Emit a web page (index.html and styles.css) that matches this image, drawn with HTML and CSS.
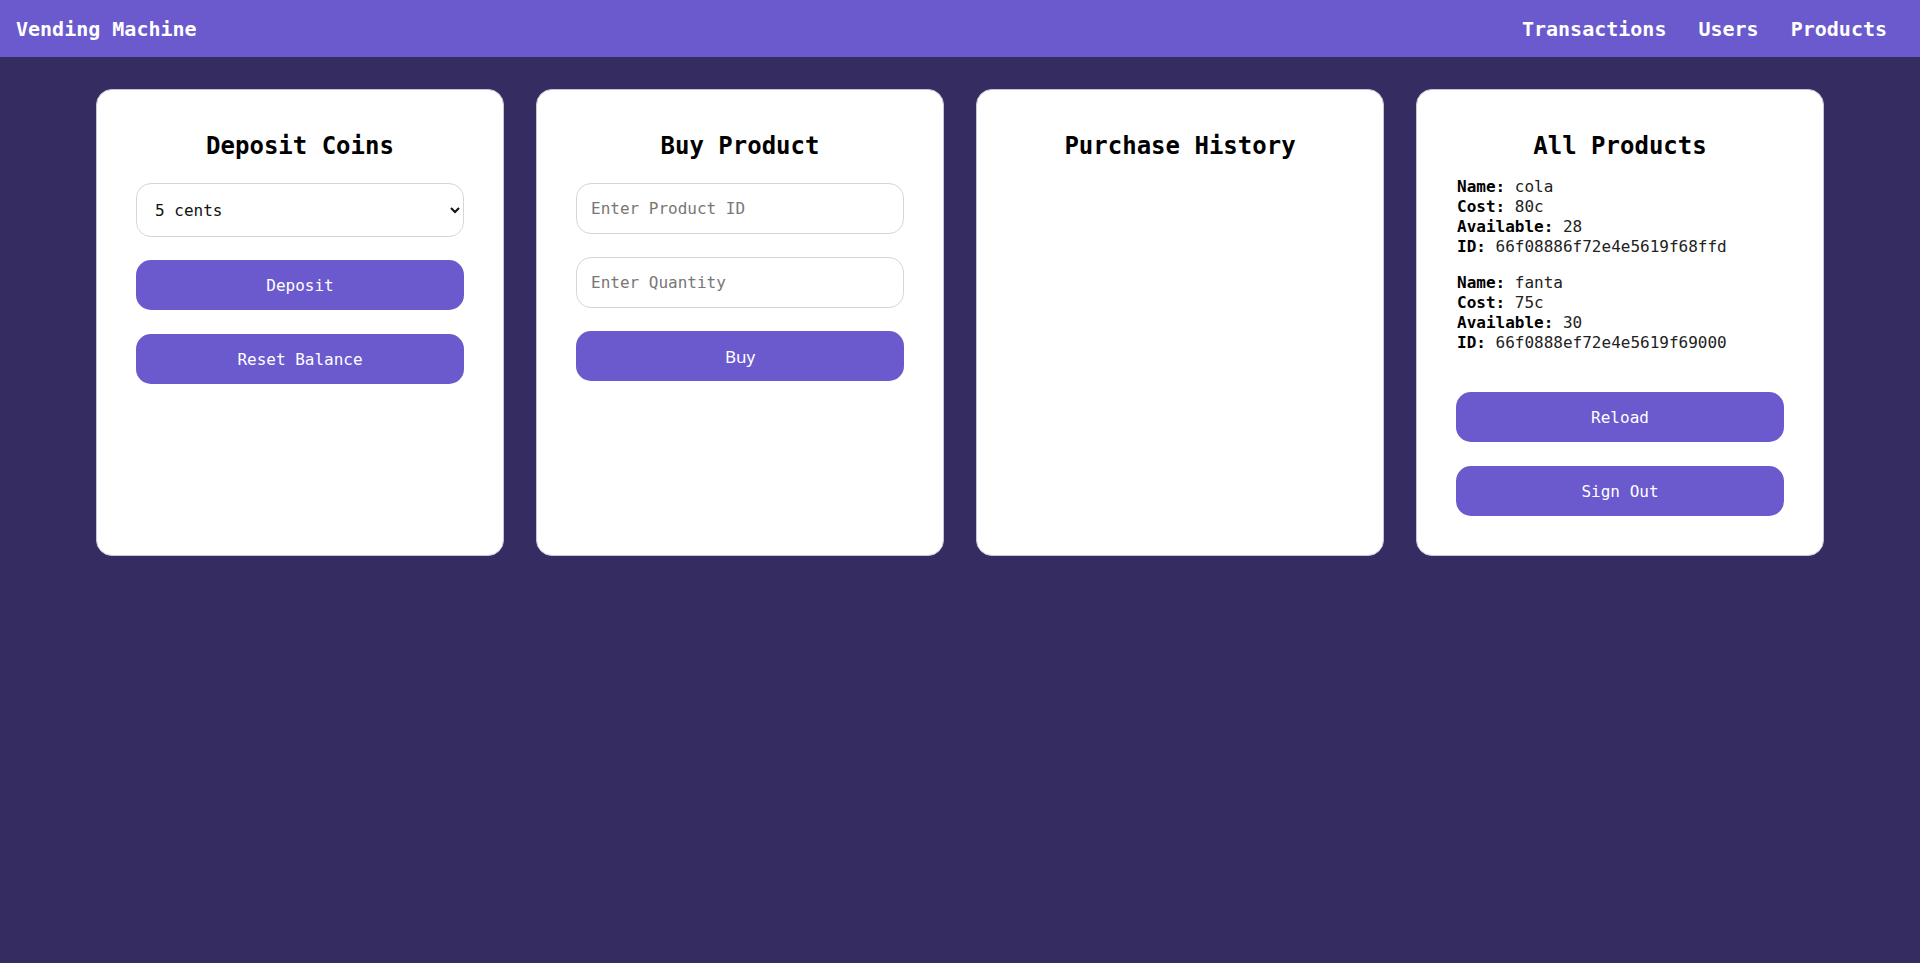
FILE: index.html
```html
<!DOCTYPE html>
<html lang="en">
<head>
<meta charset="utf-8">
<title>Vending Machine</title>
<link rel="stylesheet" href="styles.css">
</head>
<body>
<nav class="navbar">
  <div class="brand">Vending Machine</div>
  <div class="nav-links">
    <a class="nav-link" href="#">Transactions</a>
    <a class="nav-link" href="#">Users</a>
    <a class="nav-link" href="#">Products</a>
  </div>
</nav>
<main class="cards">
  <section class="card">
    <h2 class="card-title">Deposit Coins</h2>
    <div class="form">
      <select class="field select">
        <option>5 cents</option>
        <option>10 cents</option>
        <option>20 cents</option>
        <option>50 cents</option>
        <option>100 cents</option>
      </select>
      <button class="btn">Deposit</button>
      <button class="btn">Reset Balance</button>
    </div>
  </section>
  <section class="card">
    <h2 class="card-title">Buy Product</h2>
    <div class="form">
      <input class="field input" type="text" placeholder="Enter Product ID">
      <input class="field input" type="text" placeholder="Enter Quantity">
      <button class="btn btn-sans">Buy</button>
    </div>
  </section>
  <section class="card">
    <h2 class="card-title">Purchase History</h2>
  </section>
  <section class="card">
    <h2 class="card-title">All Products</h2>
    <div class="product">
      <div><b>Name:</b> cola</div>
      <div><b>Cost:</b> 80c</div>
      <div><b>Available:</b> 28</div>
      <div><b>ID:</b> 66f08886f72e4e5619f68ffd</div>
    </div>
    <div class="product">
      <div><b>Name:</b> fanta</div>
      <div><b>Cost:</b> 75c</div>
      <div><b>Available:</b> 30</div>
      <div><b>ID:</b> 66f0888ef72e4e5619f69000</div>
    </div>
    <div class="actions">
      <button class="btn">Reload</button>
      <button class="btn">Sign Out</button>
    </div>
  </section>
</main>
</body>
</html>
```
FILE: styles.css
```css
* { box-sizing: border-box; }

html, body {
  margin: 0;
  padding: 0;
}

body {
  background: #352c62;
  font-family: "DejaVu Sans Mono", "Liberation Mono", monospace;
  min-height: 963px;
}

.navbar {
  height: 57px;
  background: #6a5acd;
  display: flex;
  align-items: center;
  justify-content: space-between;
  padding: 0 33px 0 16px;
  color: #fff;
  font-size: 20px;
  font-weight: bold;
}

.nav-links {
  display: flex;
  gap: 32px;
}

.nav-link {
  color: #fff;
  text-decoration: none;
}

.cards {
  display: flex;
  justify-content: center;
  align-items: stretch;
  gap: 32px;
  padding-top: 32px;
}

.card {
  width: 408px;
  background: #fff;
  border: 1px solid #c8c4d8;
  border-radius: 16px;
  padding: 42px 39px 39px;
}

.card-title {
  margin: 0 0 17px;
  font-size: 24px;
  line-height: 28px;
  font-weight: bold;
  text-align: center;
  color: #000;
}

.form {
  display: flex;
  flex-direction: column;
  padding-top: 6px;
}

.field {
  width: 100%;
  border: 1px solid #d6d6d6;
  border-radius: 15px;
  background: #fff;
  font-family: "DejaVu Sans Mono", "Liberation Mono", monospace;
  font-size: 16px;
  color: #111;
  margin: 0 0 23px;
}

.select {
  height: 54px;
  padding: 0 12px 0 14px;
}

.input {
  height: 51px;
  padding: 0 14px;
  outline: none;
}

.input::placeholder {
  color: #777;
}

.btn {
  display: block;
  width: 100%;
  height: 50px;
  border: none;
  border-radius: 15px;
  background: #6a5acd;
  color: #fff;
  font-family: "DejaVu Sans Mono", "Liberation Mono", monospace;
  font-size: 16px;
  margin: 0 0 24px;
  cursor: pointer;
}

.btn-sans {
  font-family: "Noto Sans", "Open Sans", sans-serif;
  font-size: 17px;
}

.form .btn:last-child,
.actions .btn:last-child {
  margin-bottom: 0;
}

.product {
  font-size: 16px;
  line-height: 20px;
  color: #222;
  margin-bottom: 16px;
  padding-left: 1px;
}

.product b {
  color: #000;
}

.actions {
  margin-top: 39px;
}
```
